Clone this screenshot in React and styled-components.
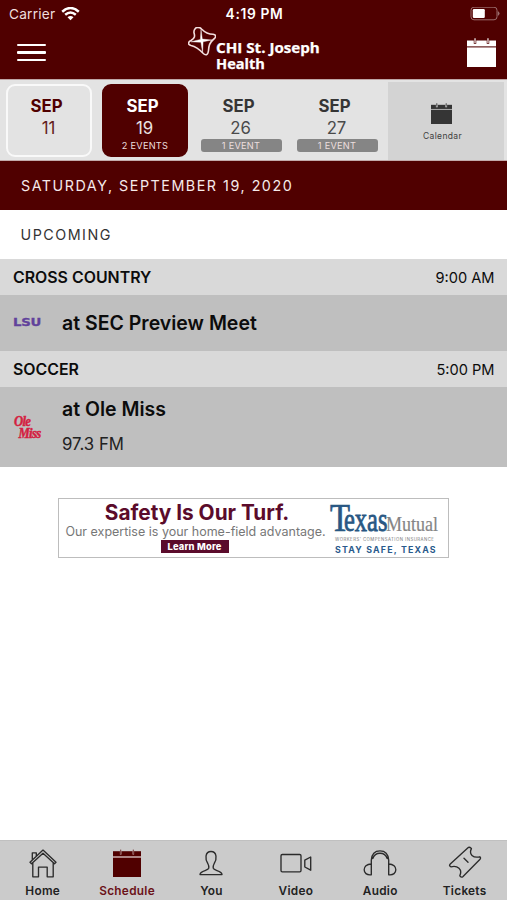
import React from "react";
import styled, { createGlobalStyle } from "styled-components";

const maroon = "#500000";

const GlobalStyle = createGlobalStyle`
  * { box-sizing: border-box; }
  body { margin: 0; background: #fff; }
`;

const Screen = styled.div`
  width: 507px;
  height: 900px;
  display: flex;
  flex-direction: column;
  overflow: hidden;
  background: #fff;
  color: #0c0c0c;
  font-family: Inter, "Liberation Sans", sans-serif;
  white-space: nowrap;
  svg { display: block; flex: none; }
`;

const Header = styled.header`
  height: 79px;
  flex: none;
  background: ${maroon};
  color: #fff;
`;

const StatusBar = styled.div`
  height: 27px;
  display: grid;
  grid-template-columns: 1fr auto 1fr;
  align-items: center;
  padding: 0 7px 0 9px;
`;

const Carrier = styled.div`
  display: flex;
  align-items: center;
  gap: 6px;
  font-size: 13.7px;
  letter-spacing: 0.2px;
  color: #eedede;
`;

const Clock = styled.div`
  font-size: 13.8px;
  font-weight: 600;
  letter-spacing: 0.65px;
`;

const BatterySlot = styled.div`
  display: flex;
  justify-content: flex-end;
`;

const Toolbar = styled.div`
  height: 52px;
  display: grid;
  grid-template-columns: 171px 1fr 30px;
  align-items: start;
  padding: 0 10px 0 17px;
`;

const MenuButton = styled.div`
  width: 29px;
  margin-top: 17px;
  display: flex;
  flex-direction: column;
  gap: 5px;
`;

const MenuLine = styled.span`
  height: 2.4px;
  border-radius: 1px;
  background: #fff;
`;

const Brand = styled.div`
  display: flex;
  align-items: flex-start;
`;

const BrandName = styled.div`
  margin-top: 13px;
  font: 700 14.3px/16px "Open Sans", "Noto Sans", sans-serif;
  -webkit-text-stroke: 0.25px #fff;
`;

const BrandLine = styled.div`
  width: max-content;
  height: 16px;
  transform: scaleX(${(p) => p.$scale});
  transform-origin: left;
`;

const CalendarSlot = styled.div`
  margin-top: 11px;
`;

const DateStrip = styled.div`
  height: 82px;
  flex: none;
  display: flex;
  justify-content: space-between;
  padding: 2px 3px 0 6px;
  background: #e3e3e3;
  border-top: 1px solid #bfa6a6;
  border-bottom: 1px solid #c4aaaa;
`;

const Days = styled.div`
  display: flex;
  gap: 10px;
  padding-top: 2px;
`;

const DayCard = styled.div`
  width: 86px;
  height: 73px;
  display: flex;
  flex-direction: column;
  align-items: center;
  border-radius: 9px;
  border: 2px solid ${(p) => ({ outlined: "#f9f9f9", active: maroon, plain: "transparent" })[p.$variant]};
  color: ${(p) => ({ outlined: maroon, active: "#fff", plain: "#353535" })[p.$variant]};
  background: ${(p) => (p.$variant === "active" ? maroon : "transparent")};
  padding-top: 10px;
`;

const Month = styled.div`
  font-size: 16.8px;
  line-height: 21px;
  font-weight: 700;
  padding-right: 5px;
`;

const DayNumber = styled.div`
  font-size: 16.8px;
  line-height: 22px;
  padding-right: 1px;
  opacity: 0.88;
`;

const EventBadge = styled.div`
  width: 81px;
  height: 13px;
  flex: none;
  border-radius: 3px;
  font-size: 9.2px;
  line-height: 13px;
  letter-spacing: 0.25px;
  text-align: center;
  color: #ecdede;
  background: ${(p) => (p.$filled ? "#858585" : "transparent")};
`;

const CalendarPanel = styled.div`
  width: 116px;
  height: 78px;
  display: flex;
  flex-direction: column;
  align-items: center;
  background: #d3d3d3;
  padding: 21px 9px 0 0;
`;

const CalendarLabel = styled.div`
  margin: 5px 0 0 2px;
  font-size: 8.5px;
  line-height: 14px;
  letter-spacing: 0.35px;
  color: #404040;
`;

const SectionBar = styled.div`
  height: 49px;
  flex: none;
  padding-left: ${(p) => (p.$dark ? 21 : 20.5)}px;
  font-size: 14.3px;
  line-height: ${(p) => (p.$dark ? 50 : 49)}px;
  letter-spacing: ${(p) => (p.$dark ? 1.52 : 1.5)}px;
  color: ${(p) => (p.$dark ? "#f6eaea" : "#333")};
  background: ${(p) => (p.$dark ? maroon : "#fff")};
`;

const SportHeader = styled.div`
  height: 36px;
  flex: none;
  display: flex;
  justify-content: space-between;
  align-items: center;
  padding: 1px 12.5px 0 13px;
  background: #d9d9d9;
`;

const SportName = styled.div`
  font-size: 15.9px;
  font-weight: 600;
`;

const StartTime = styled.div`
  font-size: 14.6px;
`;

const EventRow = styled.div`
  height: ${(p) => p.$height}px;
  flex: none;
  display: grid;
  grid-template-columns: 49px 1fr;
  align-items: center;
  padding: 0 0 1px 13px;
  background: #bfbfbf;
`;

const EventDetails = styled.div`
  display: flex;
  flex-direction: column;
  gap: 12px;
  padding-bottom: 2px;
`;

const EventTitle = styled.div`
  font-size: 19.5px;
  line-height: 24px;
  font-weight: 600;
`;

const Radio = styled.div`
  font-size: 16.8px;
  line-height: 22px;
  color: #222;
`;

const LsuMark = styled.div`
  font: 700 11px/12px "DejaVu Sans", sans-serif;
  letter-spacing: -0.2px;
  color: #61429b;
  -webkit-text-stroke: 0.3px #61429b;
  transform: scaleX(1.21);
  transform-origin: left;
`;

const OleMissMark = styled.div`
  display: flex;
  flex-direction: column;
  padding: 1px 0 0 1px;
  font: italic 700 14.5px/12px "Liberation Serif", serif;
  letter-spacing: -0.8px;
  color: #d41f42;
  -webkit-text-stroke: 0.5px #d41f42;
`;

const MarkLine = styled.span`
  padding-left: ${(p) => p.$indent}px;
  transform: scaleX(0.88);
  transform-origin: left;
`;

const Main = styled.main`
  flex: 1;
  padding: 31px 0 0 58px;
`;

const Banner = styled.div`
  width: 391px;
  height: 60px;
  display: grid;
  grid-template-columns: 271px 1fr;
  border: 1px solid #bdbdbd;
  background: #fff;
`;

const Pitch = styled.div`
  display: flex;
  flex-direction: column;
  align-items: center;
  padding-top: 1px;
`;

const Slogan = styled.div`
  font-size: 20.8px;
  line-height: 26px;
  font-weight: 700;
  color: #5b0b2b;
  padding-left: 5px;
`;

const Support = styled.div`
  height: 12px;
  font-size: 12.5px;
  line-height: 11px;
  color: #777;
  padding-left: 2px;
`;

const LearnMore = styled.div`
  margin-top: 2px;
  width: 68px;
  height: 13px;
  font-size: 9.3px;
  line-height: 13px;
  font-weight: 800;
  letter-spacing: 0.2px;
  text-align: center;
  color: #fff;
  background: #5b0b2b;
`;

const Sponsor = styled.div`
  display: flex;
  flex-direction: column;
`;

const SponsorName = styled.div`
  display: flex;
  align-items: baseline;
  height: 38px;
  font-family: "Liberation Serif", serif;
  line-height: 37px;
`;

const SponsorPart = styled.span`
  font-size: ${(p) => p.$size}px;
  color: ${(p) => p.$color};
  -webkit-text-stroke: ${(p) => p.$stroke}px ${(p) => p.$color};
  width: ${(p) => p.$width}px;
  transform: scaleX(${(p) => p.$scale});
  transform-origin: left;
`;

const SponsorLine = styled.div`
  margin-left: 5px;
  font-size: 4.3px;
  line-height: 5px;
  letter-spacing: 0.48px;
  color: #777;
`;

const SponsorTag = styled.div`
  margin: 2px 0 0 5px;
  font-size: 8.8px;
  line-height: 12px;
  font-weight: 700;
  letter-spacing: 1.2px;
  color: #2a5a8c;
`;

const TabBar = styled.nav`
  height: 60px;
  flex: none;
  display: grid;
  grid-template-columns: repeat(6, 84.4px);
  background: #cbcbcb;
  border-top: 1px solid #c0c0c0;
`;

const Tab = styled.div`
  display: flex;
  flex-direction: column;
  align-items: center;
  padding: 5px 0 0 1px;
  font-size: 11.8px;
  line-height: 18px;
  font-weight: 600;
  letter-spacing: 0.28px;
  color: ${(p) => (p.$active ? "#6b1219" : "#222")};
`;

const TabIcon = styled.svg.attrs({ width: 36, height: 36, viewBox: "0 0 36 36" })`
  fill: none;
  stroke: #2b2b2b;
  stroke-width: 1.35;
  stroke-linejoin: round;
  stroke-linecap: round;
`;

const Calendar = ({ size, color, gap }) => (
  <svg width={size} height={size} viewBox="0 0 30 30">
    <path d="M0 2.6h30V30H0z" fill={color} />
    <path d="M0 9.2h30" stroke={gap} strokeWidth="1.1" />
    <path d="M8.3 2v4M21.7 2v4" stroke={gap} strokeWidth="2.6" />
    <path d="M8.3 .3v4.8M21.7 .3v4.8" stroke={color} strokeWidth="1.2" />
  </svg>
);

const Wifi = () => (
  <svg width="19" height="14" viewBox="0 0 19 14" fill="none" stroke="#fff" strokeWidth="2.5">
    <path d="M1.2 4.7Q9.5-2.6 17.8 4.7M4.2 7.8Q9.5 3.2 14.8 7.8" />
    <path d="M6.5 10.2Q9.5 7.6 12.5 10.2L9.5 13.2z" fill="#fff" stroke="none" />
  </svg>
);

const Battery = () => (
  <svg width="30" height="14" viewBox="0 0 30 14">
    <rect x="1" y=".2" width="26" height="12.6" rx="3" fill="none" stroke="#9b6d6d" />
    <rect x="2.8" y="2" width="12" height="9" rx="1.2" fill="#fff" />
    <path d="M27.8 4q3.5 2.5 0 5z" fill="#9b6d6d" />
  </svg>
);

const CrossMark = () => (
  <svg width="28" height="30" viewBox="0 0 28 30">
    <path
      d="M7 2C8-.2 11.5-.2 13.5 2C17.5 6 20 7.3 25 7.3C29 8 28 10.5 25.3 12.5C21.5 15.5 20.7 19 20.5 23.5C20 28.5 17.5 28.8 14.8 26C11 22 8 19.8 3 18.5C-.5 17.5-.2 15.2 3 13.5C7 11 7 9 6 5.8Q5.7 3.5 7 2Z"
      fill="none" stroke="#f3dede" strokeWidth="1.6"
    />
    <path d="M13 2.5l1.3 9.6 9.7.9-8.9 1.7L14.6 25.5l-1.7-10.2-9.9-.5 9.4-2.4z" fill="#fff" stroke="#fff" strokeWidth=".4" />
  </svg>
);

const tabs = [
  {
    label: "Home",
    icon: (
      <TabIcon>
        <path d="M5 16.3L18 4.1 31 16.3l-1.5 1.5L18 7.3 6.5 17.8zM7.8 17v13.8h5.7V21.1h8.7v9.7h6V17M7.3 13.8V6.8h4V10" />
      </TabIcon>
    ),
  },
  {
    label: "Schedule",
    active: true,
    icon: (
      <TabIcon>
        <path d="M4 5.2h28V31H4z" fill={maroon} stroke="none" />
        <path d="M4 11h28M11.7 4.5v4M24.3 4.5v4" stroke="#cbb0b0" strokeWidth="1.6" strokeLinecap="butt" />
        <path d="M11.7 4v3.6M24.3 4v3.6" stroke={maroon} strokeWidth=".7" />
      </TabIcon>
    ),
  },
  {
    label: "You",
    icon: (
      <TabIcon>
        <path d="M15.8 22.2Q16 19.5 14.8 17.5C12 13.5 11.8 5.5 18 5.5S24 13.5 21.2 17.5Q20 19.5 20.2 22.2C20.7 24.8 29 24.5 29 28.6H7C7 24.5 15.3 24.8 15.8 22.2Z" />
      </TabIcon>
    ),
  },
  {
    label: "Video",
    icon: (
      <TabIcon>
        <rect x="3" y="8.5" width="20" height="17.3" rx="1.3" />
        <path d="M26.8 14.2l5.9-3.2V24.2l-5.9-3.2z" />
      </TabIcon>
    ),
  },
  {
    label: "Audio",
    icon: (
      <TabIcon>
        <path d="M9.3 18V28.8C-.2 30 -.2 18 9.3 18V14Q10 4.8 18 4.8T26.7 14V18C36.2 18 36.2 30 26.7 28.8V18M10.8 12.5Q12.5 7.2 18 7.2T25.2 12.5" />
      </TabIcon>
    ),
  },
  {
    label: "Tickets",
    icon: (
      <TabIcon>
        <path d="M3 18.3L21 1.7Q22.3 .6 24.4 2.6Q22.3 7 25 9.4Q27.8 12 32.8 10.8Q34.3 12 32.8 13.5L15.8 30.7Q14.4 31.8 12.8 29.8Q15 25 12 22.2Q9 19.5 4 20.8Q1.8 20 3 18.3ZM17 12.3l4 4" />
      </TabIcon>
    ),
  },
];

const days = [
  { month: "SEP", day: 11, variant: "outlined" },
  { month: "SEP", day: 19, variant: "active", note: "2 EVENTS" },
  { month: "SEP", day: 26, variant: "plain", note: "1 EVENT" },
  { month: "SEP", day: 27, variant: "plain", note: "1 EVENT" },
];

export default function App() {
  return (
    <Screen>
      <GlobalStyle />
      <Header>
        <StatusBar>
          <Carrier>Carrier <Wifi /></Carrier>
          <Clock>4:19 PM</Clock>
          <BatterySlot><Battery /></BatterySlot>
        </StatusBar>
        <Toolbar>
          <MenuButton><MenuLine /><MenuLine /><MenuLine /></MenuButton>
          <Brand>
            <CrossMark />
            <BrandName>
              <BrandLine $scale={1.06}>CHI St. Joseph</BrandLine>
              <BrandLine $scale={1.02}>Health</BrandLine>
            </BrandName>
          </Brand>
          <CalendarSlot><Calendar size={29} color="#fff" gap={maroon} /></CalendarSlot>
        </Toolbar>
      </Header>

      <DateStrip>
        <Days>
          {days.map((d) => (
            <DayCard key={d.day} $variant={d.variant}>
              <Month>{d.month}</Month>
              <DayNumber>{d.day}</DayNumber>
              {d.note && <EventBadge $filled={d.variant === "plain"}>{d.note}</EventBadge>}
            </DayCard>
          ))}
        </Days>
        <CalendarPanel>
          <Calendar size={21} color="#353535" gap="#d3d3d3" />
          <CalendarLabel>Calendar</CalendarLabel>
        </CalendarPanel>
      </DateStrip>

      <SectionBar $dark>SATURDAY, SEPTEMBER 19, 2020</SectionBar>
      <SectionBar>UPCOMING</SectionBar>

      <SportHeader>
        <SportName>CROSS COUNTRY</SportName>
        <StartTime>9:00 AM</StartTime>
      </SportHeader>
      <EventRow $height={56}>
        <LsuMark>LSU</LsuMark>
        <EventTitle>at SEC Preview Meet</EventTitle>
      </EventRow>
      <SportHeader>
        <SportName>SOCCER</SportName>
        <StartTime>5:00 PM</StartTime>
      </SportHeader>
      <EventRow $height={80}>
        <OleMissMark>
          <MarkLine $indent={0}>Ole</MarkLine>
          <MarkLine $indent={5}>Miss</MarkLine>
        </OleMissMark>
        <EventDetails>
          <EventTitle>at Ole Miss</EventTitle>
          <Radio>97.3 FM</Radio>
        </EventDetails>
      </EventRow>

      <Main>
        <Banner>
          <Pitch>
            <Slogan>Safety Is Our Turf.</Slogan>
            <Support>Our expertise is your home-field advantage.</Support>
            <LearnMore>Learn More</LearnMore>
          </Pitch>
          <Sponsor>
            <SponsorName>
              <SponsorPart $size={40} $color="#285783" $stroke={0.7} $width={14} $scale={0.82}>T</SponsorPart>
              <SponsorPart $size={34} $color="#285783" $stroke={0.8} $width={42} $scale={0.72}>exas</SponsorPart>
              <SponsorPart $size={22} $color="#858585" $stroke={0.2} $width={50} $scale={0.82}>Mutual</SponsorPart>
            </SponsorName>
            <SponsorLine>WORKERS’ COMPENSATION INSURANCE</SponsorLine>
            <SponsorTag>STAY SAFE, TEXAS</SponsorTag>
          </Sponsor>
        </Banner>
      </Main>

      <TabBar>
        {tabs.map((t) => (
          <Tab key={t.label} $active={t.active}>
            {t.icon}
            {t.label}
          </Tab>
        ))}
      </TabBar>
    </Screen>
  );
}
